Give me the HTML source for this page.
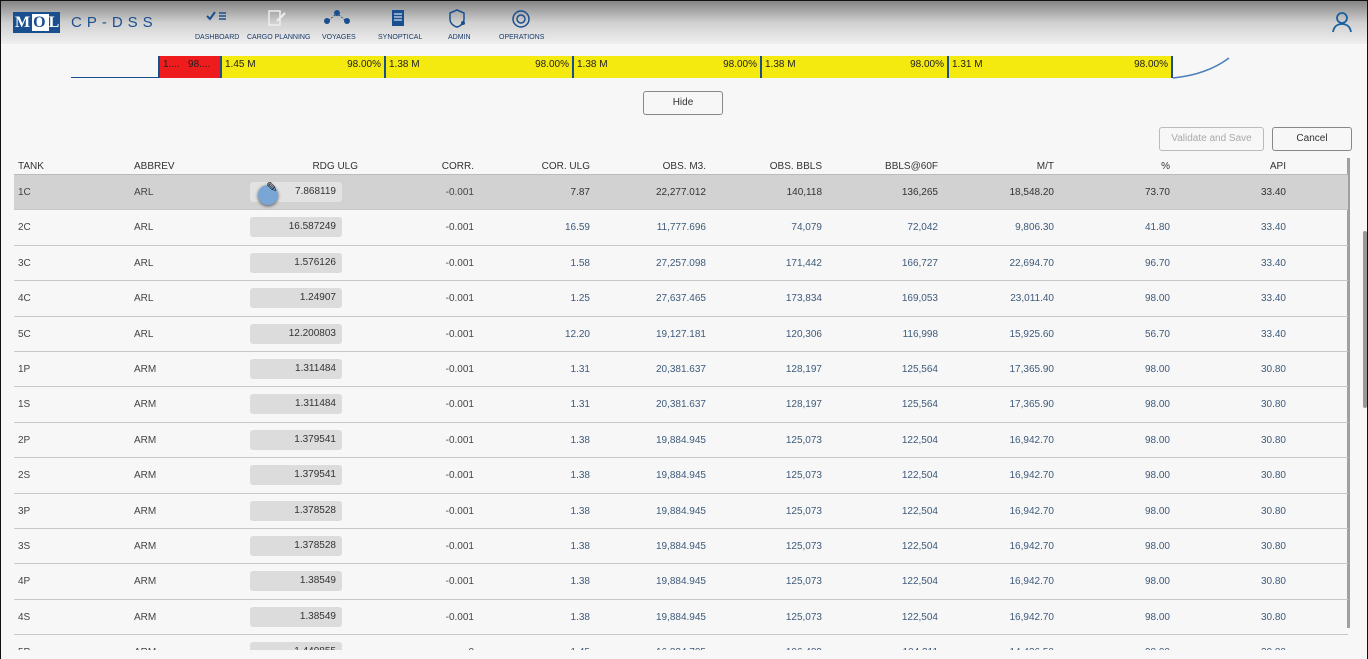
<!DOCTYPE html>
<html><head><meta charset="utf-8"><style>
*{margin:0;padding:0;box-sizing:border-box}
html{width:1368px;height:659px;overflow:hidden}
body{width:1368px;height:659px;overflow:hidden;background:#f7f7f7;font-family:"Liberation Sans",sans-serif;position:relative;border:1px solid #111}
.hdr{position:absolute;left:0;top:0;width:1366px;height:43px;background:linear-gradient(#858585 0%,#d0d0d0 50%,#efefef 100%)}
.logo{position:absolute;left:12px;top:11px;width:47px;height:21px;background:#1a4f8f;color:#fff;font:bold 16px "Liberation Serif",serif;letter-spacing:2px;padding-left:2px;line-height:21px}
.logo span{background:#fff;color:#1a4f8f;padding:0 1px}
.cp{position:absolute;left:70px;top:13px;color:#1a4f8f;font-size:15px;letter-spacing:5px}
.nav{position:absolute;top:33px;font-size:7px;color:#1a3a6a;text-align:center}
.ico{position:absolute;top:8px}
.bar{position:absolute;top:55px;height:22px;border-left:2px solid #1a4f8f;font-size:10px;line-height:10px;padding:4px 3px;color:#222}
.y{background:#f5ea10}
.btn{position:absolute;height:24px;border:1px solid #888;border-radius:3px;background:#f7f7f7;font-size:10px;text-align:center;line-height:22px;color:#333}
.tbl{position:absolute;left:13px;top:157px;width:1334px}
.row{position:relative;height:35.4px;border-bottom:1.5px solid #c8c8c8;font-size:10px;color:#3e5a7a}
.row.h{height:17px;border-bottom:1.5px solid #bbb;color:#333}
.row.sel{background:#d2d2d2;color:#333}
.c{position:absolute;top:12px;white-space:nowrap}
.g{color:#444}
.h .c{top:3px}
.r{text-align:right}
.inp{position:absolute;left:236px;top:7px;width:92px;height:20px;background:#dcdcdc;border-radius:3px;text-align:right;padding-right:6px;line-height:20px;color:#333}
.sel .inp{background:#e2e2e2}
</style></head><body>
<div class="hdr">
<div class="logo">M<span>O</span>L</div>
<div class="cp">CP-DSS</div>
<svg class="ico" style="left:204px" width="24" height="14"><path d="M2 7l3 3 5-7" stroke="#1a4f8f" stroke-width="2" fill="none"/><path d="M14 4h7M14 7h7M14 10h7" stroke="#1a4f8f" stroke-width="1.5"/></svg>
<svg class="ico" style="left:266px" width="20" height="18"><rect x="2" y="2" width="11" height="14" fill="none" stroke="#eee" stroke-width="1.5"/><path d="M10 12l8-8" stroke="#eee" stroke-width="2"/></svg>
<svg class="ico" style="left:322px" width="28" height="18"><circle cx="4" cy="12" r="3" fill="#1a4f8f"/><circle cx="14" cy="4" r="3" fill="#1a4f8f"/><circle cx="24" cy="12" r="3" fill="#1a4f8f"/><path d="M6 11l6-5M16 6l6 5" stroke="#1a4f8f" stroke-dasharray="1.5 1.5"/></svg>
<svg class="ico" style="left:390px" width="14" height="18"><rect x="1" y="1" width="12" height="16" fill="#1a4f8f"/><path d="M3 5h8M3 8h8M3 11h8" stroke="#fff"/></svg>
<svg class="ico" style="left:448px" width="18" height="20"><path d="M8 1l7 3v6c0 4-3 7-7 8-4-1-7-4-7-8V4z" fill="none" stroke="#1a4f8f" stroke-width="1.5"/><circle cx="14" cy="14" r="2" fill="#1a4f8f"/></svg>
<svg class="ico" style="left:510px" width="20" height="20"><circle cx="10" cy="10" r="8" fill="none" stroke="#1a4f8f" stroke-width="1.5"/><circle cx="10" cy="10" r="4" fill="none" stroke="#1a4f8f" stroke-width="1.5"/></svg>
<div class="nav" style="left:194px">DASHBOARD</div>
<div class="nav" style="left:246px">CARGO PLANNING</div>
<div class="nav" style="left:321px">VOYAGES</div>
<div class="nav" style="left:377px">SYNOPTICAL</div>
<div class="nav" style="left:447px">ADMIN</div>
<div class="nav" style="left:498px">OPERATIONS</div>
<svg style="position:absolute;left:1330px;top:10px" width="22" height="22"><circle cx="11" cy="7" r="5" fill="none" stroke="#1a5fa0" stroke-width="1.8"/><path d="M2 21c1-6 5-8 9-8s8 2 9 8" fill="none" stroke="#1a5fa0" stroke-width="1.8"/></svg>
</div>
<div style="position:absolute;left:70px;top:76px;width:1102px;height:1px;background:#1a4f8f"></div>
<svg style="position:absolute;left:1170px;top:55px" width="60" height="24"><path d="M2 22c20-2 40-8 56-20" stroke="#4a7fb8" fill="none" stroke-width="1.5"/></svg>
<div class="bar" style="left:157px;width:62px;background:#ee1c1c">1....&nbsp;&nbsp;&nbsp;98....</div>
<div class="bar y" style="left:219px;width:164px">1.45 M<span style="float:right">98.00%</span></div>
<div class="bar y" style="left:383px;width:188px">1.38 M<span style="float:right">98.00%</span></div>
<div class="bar y" style="left:571px;width:188px">1.38 M<span style="float:right">98.00%</span></div>
<div class="bar y" style="left:759px;width:187px">1.38 M<span style="float:right">98.00%</span></div>
<div class="bar y" style="left:946px;width:226px;border-right:2px solid #1a4f8f">1.31 M<span style="float:right">98.00%</span></div>
<div class="btn" style="left:642px;top:90px;width:80px">Hide</div>
<div class="btn" style="left:1158px;top:126px;width:105px;border-color:#bbb;color:#aaa">Validate and Save</div>
<div class="btn" style="left:1271px;top:126px;width:80px">Cancel</div>
<div style="position:absolute;left:1346px;top:157px;width:3px;height:470px;background:#a0a0a0"></div>
<div style="position:absolute;left:1362px;top:230px;width:4px;height:177px;background:#999;border-radius:2px"></div>
<div class="tbl" id="t"></div>
<script>
var d=[["1C","ARL","7.868119","7.87","22,277.012","140,118","136,265","18,548.20","73.70","33.40"],
["2C","ARL","16.587249","16.59","11,777.696","74,079","72,042","9,806.30","41.80","33.40"],
["3C","ARL","1.576126","1.58","27,257.098","171,442","166,727","22,694.70","96.70","33.40"],
["4C","ARL","1.24907","1.25","27,637.465","173,834","169,053","23,011.40","98.00","33.40"],
["5C","ARL","12.200803","12.20","19,127.181","120,306","116,998","15,925.60","56.70","33.40"],
["1P","ARM","1.311484","1.31","20,381.637","128,197","125,564","17,365.90","98.00","30.80"],
["1S","ARM","1.311484","1.31","20,381.637","128,197","125,564","17,365.90","98.00","30.80"],
["2P","ARM","1.379541","1.38","19,884.945","125,073","122,504","16,942.70","98.00","30.80"],
["2S","ARM","1.379541","1.38","19,884.945","125,073","122,504","16,942.70","98.00","30.80"],
["3P","ARM","1.378528","1.38","19,884.945","125,073","122,504","16,942.70","98.00","30.80"],
["3S","ARM","1.378528","1.38","19,884.945","125,073","122,504","16,942.70","98.00","30.80"],
["4P","ARM","1.38549","1.38","19,884.945","125,073","122,504","16,942.70","98.00","30.80"],
["4S","ARM","1.38549","1.38","19,884.945","125,073","122,504","16,942.70","98.00","30.80"],
["5P","ARM","1.449855","1.45","16,834.705","106,489","104,311","14,436.50","98.00","30.80"]];
var R=[460,576,692,808,924,1040,1156,1272];
var h='<div class="row h"><div class="c" style="left:4px">TANK</div><div class="c" style="left:120px">ABBREV</div><div class="c r" style="right:990px">RDG ULG</div>';
var H=["CORR.","COR. ULG","OBS. M3.","OBS. BBLS","BBLS@60F","M/T","%","API"];
H.forEach(function(t,i){h+='<div class="c r" style="right:'+(1334-R[i])+'px">'+t+'</div>'});
h+='</div>';
d.forEach(function(r,k){
 h+='<div class="row'+(k==0?' sel':'')+'"><div class="c g" style="left:4px">'+r[0]+'</div><div class="c g" style="left:120px">'+r[1]+'</div><div class="inp">'+r[2]+'</div>';
 var v=[k==13?"0":"-0.001"].concat(r.slice(3));
 v.forEach(function(t,i){h+='<div class="c r'+(i==0?' g':'')+'" style="right:'+(1334-R[i])+'px">'+t+'</div>'});
 if(k==0)h+='<div style="position:absolute;left:244px;top:10px;width:20px;height:20px;border-radius:50%;background:#7aa6d6;box-shadow:0 1px 3px #555"></div><div style="position:absolute;left:252px;top:4px;font-size:14px;color:#222">✎</div>';
 h+='</div>';
});
document.getElementById('t').innerHTML=h;
</script>
<div style="position:absolute;left:0;top:649px;width:1366px;height:10px;background:#f7f7f7"></div>
</body></html>
